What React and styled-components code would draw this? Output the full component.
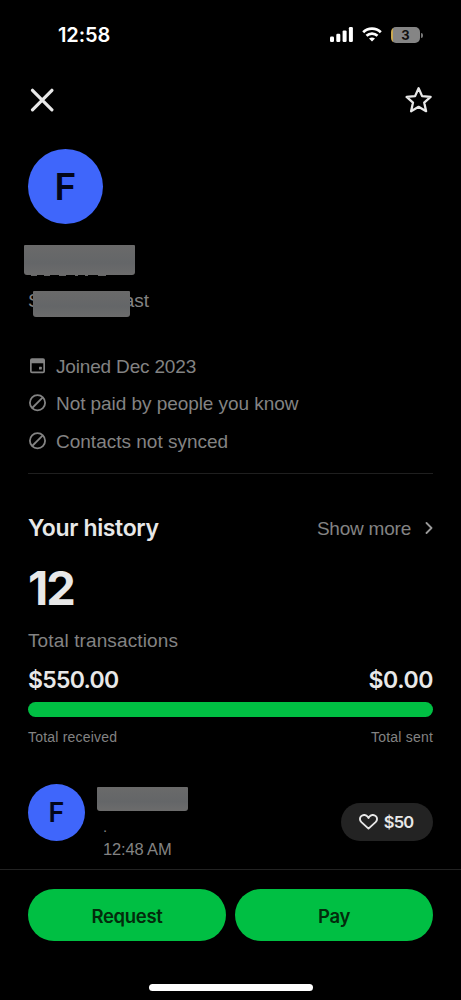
import React from "react";
import styled, { createGlobalStyle } from "styled-components";

const GlobalStyle = createGlobalStyle`
  * { box-sizing: border-box; }
  body {
    margin: 0;
    background: #000;
    font-family: Inter, "Liberation Sans", sans-serif;
  }
  svg { display: block; flex: none; }
`;

const Screen = styled.div`
  width: 461px;
  height: 1000px;
  background: #000;
  color: #e8e8e8;
  display: flex;
  flex-direction: column;
  overflow: hidden;
`;

const Text = styled.span`
  display: block;
  white-space: nowrap;
  font-size: ${(p) => p.$size}px;
  line-height: ${(p) => p.$line || 24}px;
  font-weight: ${(p) => p.$weight || 400};
  letter-spacing: ${(p) => p.$track || 0}px;
  color: ${(p) => p.$color || "#e8e8e8"};
`;

const Muted = styled(Text)`
  font-family: "Liberation Sans", Arial, sans-serif;
  color: #838383;
`;

const StatusBar = styled.div`
  height: 69px;
  padding: 0 37px 0 58px;
  display: flex;
  align-items: center;
  justify-content: space-between;
`;

const StatusIcons = styled.div`
  display: flex;
  align-items: center;
  gap: 9px;
`;

const Header = styled.header`
  height: 62px;
  padding: 0 28px 0 30px;
  display: flex;
  align-items: center;
  justify-content: space-between;
`;

const Content = styled.main`
  flex: 1;
  padding: 18px 28px 0;
`;

const Avatar = styled.div`
  width: ${(p) => p.$size}px;
  height: ${(p) => p.$size}px;
  flex: none;
  border-radius: 50%;
  background: #3f66fb;
  color: #03061a;
  display: flex;
  align-items: center;
  justify-content: center;
  font-size: ${(p) => p.$font}px;
  font-weight: 600;
`;

const Redaction = styled.div`
  width: ${(p) => p.$width}px;
  height: ${(p) => p.$height}px;
  border-radius: 1px 1px 3px 3px;
  background: linear-gradient(#6a6a6a, #646668 60%, #6c6c6c);
`;

const NameLine = styled.div`
  margin: 21px 0 0 -4px;
  height: 46px;
`;

const Remnant = styled.svg`
  margin: 0 0 0 4px;
`;

const HandleLine = styled.div`
  position: relative;
  width: 121px;
  height: 26px;
  display: flex;
  justify-content: space-between;
  align-items: flex-start;
`;

const HandleCover = styled.div`
  position: absolute;
  left: 5px;
  top: 0;
`;

const Facts = styled.ul`
  list-style: none;
  margin: 30px 0 0;
  padding: 0 0 13px;
  border-bottom: 1px solid #1f1f1f;
`;

const Fact = styled.li`
  height: 37.5px;
  display: flex;
  align-items: center;
  gap: 10px;
  ${Muted} { padding-top: 2px; }
`;

const SplitRow = styled.div`
  display: flex;
  align-items: center;
  justify-content: space-between;
  margin-top: ${(p) => p.$top || 0}px;
`;

const ShowMore = styled.div`
  display: flex;
  align-items: center;
  gap: 14px;
  ${Muted} { padding-top: 2px; }
`;

const Count = styled(Text)`
  margin-top: 16px;
`;

const Progress = styled.div`
  height: 15px;
  margin-top: 10px;
  border-radius: 8px;
  background: #00bf43;
`;

const Transaction = styled.div`
  display: flex;
  margin-top: 37px;
`;

const TransactionInfo = styled.div`
  flex: 1;
  margin: 3px 0 0 12px;
`;

const TransactionMeta = styled.div`
  margin: 6px 0 0 6px;
`;

const Pill = styled.div`
  width: 92px;
  height: 38px;
  margin-top: 19px;
  padding: 1px 2px 0 0;
  border-radius: 19px;
  background: #232323;
  display: flex;
  align-items: center;
  justify-content: center;
  gap: 6px;
`;

const Footer = styled.footer`
  height: 131px;
  border-top: 1px solid #222;
  padding: 19px 28px 9px;
  display: flex;
  flex-direction: column;
  align-items: center;
  justify-content: space-between;
`;

const Actions = styled.div`
  width: 100%;
  display: flex;
  gap: 9px;
`;

const ActionButton = styled.button`
  flex: 1;
  height: 52px;
  padding: 2px 0 0;
  border: 0;
  border-radius: 26px;
  background: #00bf43;
  display: flex;
  align-items: center;
  justify-content: center;
  font-family: inherit;
`;

const HomeIndicator = styled.div`
  width: 164px;
  height: 7px;
  border-radius: 4px;
  background: #fff;
`;

const Battery = styled.div`
  position: relative;
  width: 29px;
  height: 16px;
  border-radius: 5px;
  background: linear-gradient(90deg, #c9a850 0 1.5px, #858585 2px);
  display: flex;
  align-items: center;
  justify-content: center;
  margin-right: 4px;
  &::after {
    content: "";
    position: absolute;
    left: 30px;
    top: 6px;
    width: 2px;
    height: 5px;
    border-radius: 0 2px 2px 0;
    background: #777;
  }
`;

const grey = "#838383";

const SignalIcon = () => (
  <svg width="23" height="15" viewBox="0 0 23 15" fill="#fff">
    <rect x="0" y="9.5" width="4" height="5.5" rx="1.2" />
    <rect x="6.3" y="6.8" width="4" height="8.2" rx="1.2" />
    <rect x="12.6" y="3.4" width="4" height="11.6" rx="1.2" />
    <rect x="18.9" y="0" width="4" height="15" rx="1.2" />
  </svg>
);

const WifiIcon = () => (
  <svg width="20" height="15" viewBox="0 0 20 15" fill="none" stroke="#fff" strokeWidth="2.7">
    <path d="M1.2 5.3C6 .5 14 .5 18.8 5.3" />
    <path d="M4.5 8.7C7.6 5.8 12.4 5.8 15.5 8.7" />
    <path d="M10 14.6L7 11.6Q10 9.2 13 11.6Z" fill="#fff" stroke="none" />
  </svg>
);

const CloseIcon = () => (
  <svg width="24" height="24" viewBox="0 0 24 24" stroke="#e8e8e8" strokeWidth="3.2" strokeLinecap="round">
    <path d="M2.5 2.3L21.9 21.8M21.9 2.3L2.5 21.8" />
  </svg>
);

const StarIcon = () => (
  <svg width="28" height="28" viewBox="0 0 28 28" fill="none" stroke="#e8e8e8" strokeWidth="2.3" strokeLinejoin="round">
    <path d="M13.6 2.2L17.1 10.1L25.6 10.9L19.2 16.6L21.1 25.2L13.6 20.8L6.1 25.2L8 16.6L1.6 10.9L10.1 10.1Z" />
  </svg>
);

const CalendarIcon = () => (
  <svg width="18" height="18" viewBox="0 0 18 18">
    <path fillRule="evenodd" fill={grey} d="M4 1.2H15Q17 1.2 17 3.2V14.2Q17 16.2 15 16.2H4Q2 16.2 2 14.2V3.2Q2 1.2 4 1.2ZM3.7 6.2V14.5H15.3V6.2Z" />
    <rect x="11" y="9.8" width="2.8" height="2.8" rx=".5" fill={grey} />
  </svg>
);

const BlockedIcon = () => (
  <svg width="18" height="18" viewBox="0 0 18 18" fill="none" stroke={grey} strokeWidth="1.8">
    <circle cx="9.5" cy="8.7" r="7.6" />
    <path d="M4.2 14L14.8 3.4" />
  </svg>
);

const ChevronIcon = () => (
  <svg width="8" height="12" viewBox="0 0 8 12" fill="none" stroke="#999" strokeWidth="1.8" strokeLinecap="round" strokeLinejoin="round">
    <path d="M1.5 1L6.5 6L1.5 11" />
  </svg>
);

const HeartIcon = () => (
  <svg width="19" height="16" viewBox="0 0 19 16" fill="none" stroke="#e8e8e8" strokeWidth="1.9" strokeLinejoin="round">
    <path d="M9.5 14.6L2.4 8.1C.4 6.1.6 3.5 2.2 2.1C4.2.3 7.3.7 8.7 2.7L9.5 3.9L10.3 2.7C11.7.7 14.8.3 16.8 2.1C18.4 3.5 18.6 6.1 16.6 8.1Z" />
  </svg>
);

export default function App() {
  return (
    <Screen>
      <GlobalStyle />
      <StatusBar>
        <Text $size={20} $weight={600} $color="#fff" $track={-0.1}>12:58</Text>
        <StatusIcons>
          <SignalIcon />
          <WifiIcon />
          <Battery>
            <Text $size={13} $line={16} $weight={700} $color="#111">3</Text>
          </Battery>
        </StatusIcons>
      </StatusBar>
      <Header>
        <CloseIcon />
        <StarIcon />
      </Header>
      <Content>
        <Avatar $size={75} $font={37}>F</Avatar>
        <NameLine>
          <Redaction $width={111} $height={30} />
          <Remnant width="84" height="1" viewBox="0 0 84 1" fill="#666">
            <path d="M3 0H9V1H3ZM16 0H22V1H16ZM31 0H38V1H31ZM47 0H50V1H47ZM57 0H60V1H57ZM70 0H78V1H70Z" />
          </Remnant>
        </NameLine>
        <HandleLine>
          <Muted $size={19} $line={20}>S</Muted>
          <Muted $size={19} $line={20}>ast</Muted>
          <HandleCover><Redaction $width={97} $height={26} /></HandleCover>
        </HandleLine>
        <Facts>
          <Fact><CalendarIcon /><Muted $size={19} $track={-0.17}>Joined Dec 2023</Muted></Fact>
          <Fact><BlockedIcon /><Muted $size={19} $track={-0.06}>Not paid by people you know</Muted></Fact>
          <Fact><BlockedIcon /><Muted $size={19}>Contacts not synced</Muted></Fact>
        </Facts>
        <SplitRow $top={38}>
          <Text $size={23} $line={32} $weight={600} $track={-0.35}>Your history</Text>
          <ShowMore>
            <Muted $size={19} $track={-0.22}>Show more</Muted>
            <ChevronIcon />
          </ShowMore>
        </SplitRow>
        <Count $size={47} $line={56} $weight={700} $track={-2}>12</Count>
        <SplitRow $top={13}>
          <Muted $size={19} $track={0.12}>Total transactions</Muted>
        </SplitRow>
        <SplitRow $top={15}>
          <Text $size={23} $weight={600} $track={-0.7}>$550.00</Text>
          <Text $size={23} $weight={600} $track={-0.4}>$0.00</Text>
        </SplitRow>
        <Progress />
        <SplitRow $top={10}>
          <Muted $size={14} $line={20} $track={0.2}>Total received</Muted>
          <Muted $size={14} $line={20} $track={0.2}>Total sent</Muted>
        </SplitRow>
        <Transaction>
          <Avatar $size={57} $font={27}>F</Avatar>
          <TransactionInfo>
            <Redaction $width={91} $height={24} />
            <TransactionMeta>
              <Muted $size={15} $line={20}>.</Muted>
              <Muted $size={16.5} $line={24} $track={-0.15}>12:48 AM</Muted>
            </TransactionMeta>
          </TransactionInfo>
          <Pill>
            <HeartIcon />
            <Text $size={16.5} $weight={600} $track={-0.8}>$50</Text>
          </Pill>
        </Transaction>
      </Content>
      <Footer>
        <Actions>
          <ActionButton><Text $size={18.5} $weight={600} $track={-0.3} $color="#032b0c">Request</Text></ActionButton>
          <ActionButton><Text $size={18.5} $weight={600} $track={-0.3} $color="#032b0c">Pay</Text></ActionButton>
        </Actions>
        <HomeIndicator />
      </Footer>
    </Screen>
  );
}
